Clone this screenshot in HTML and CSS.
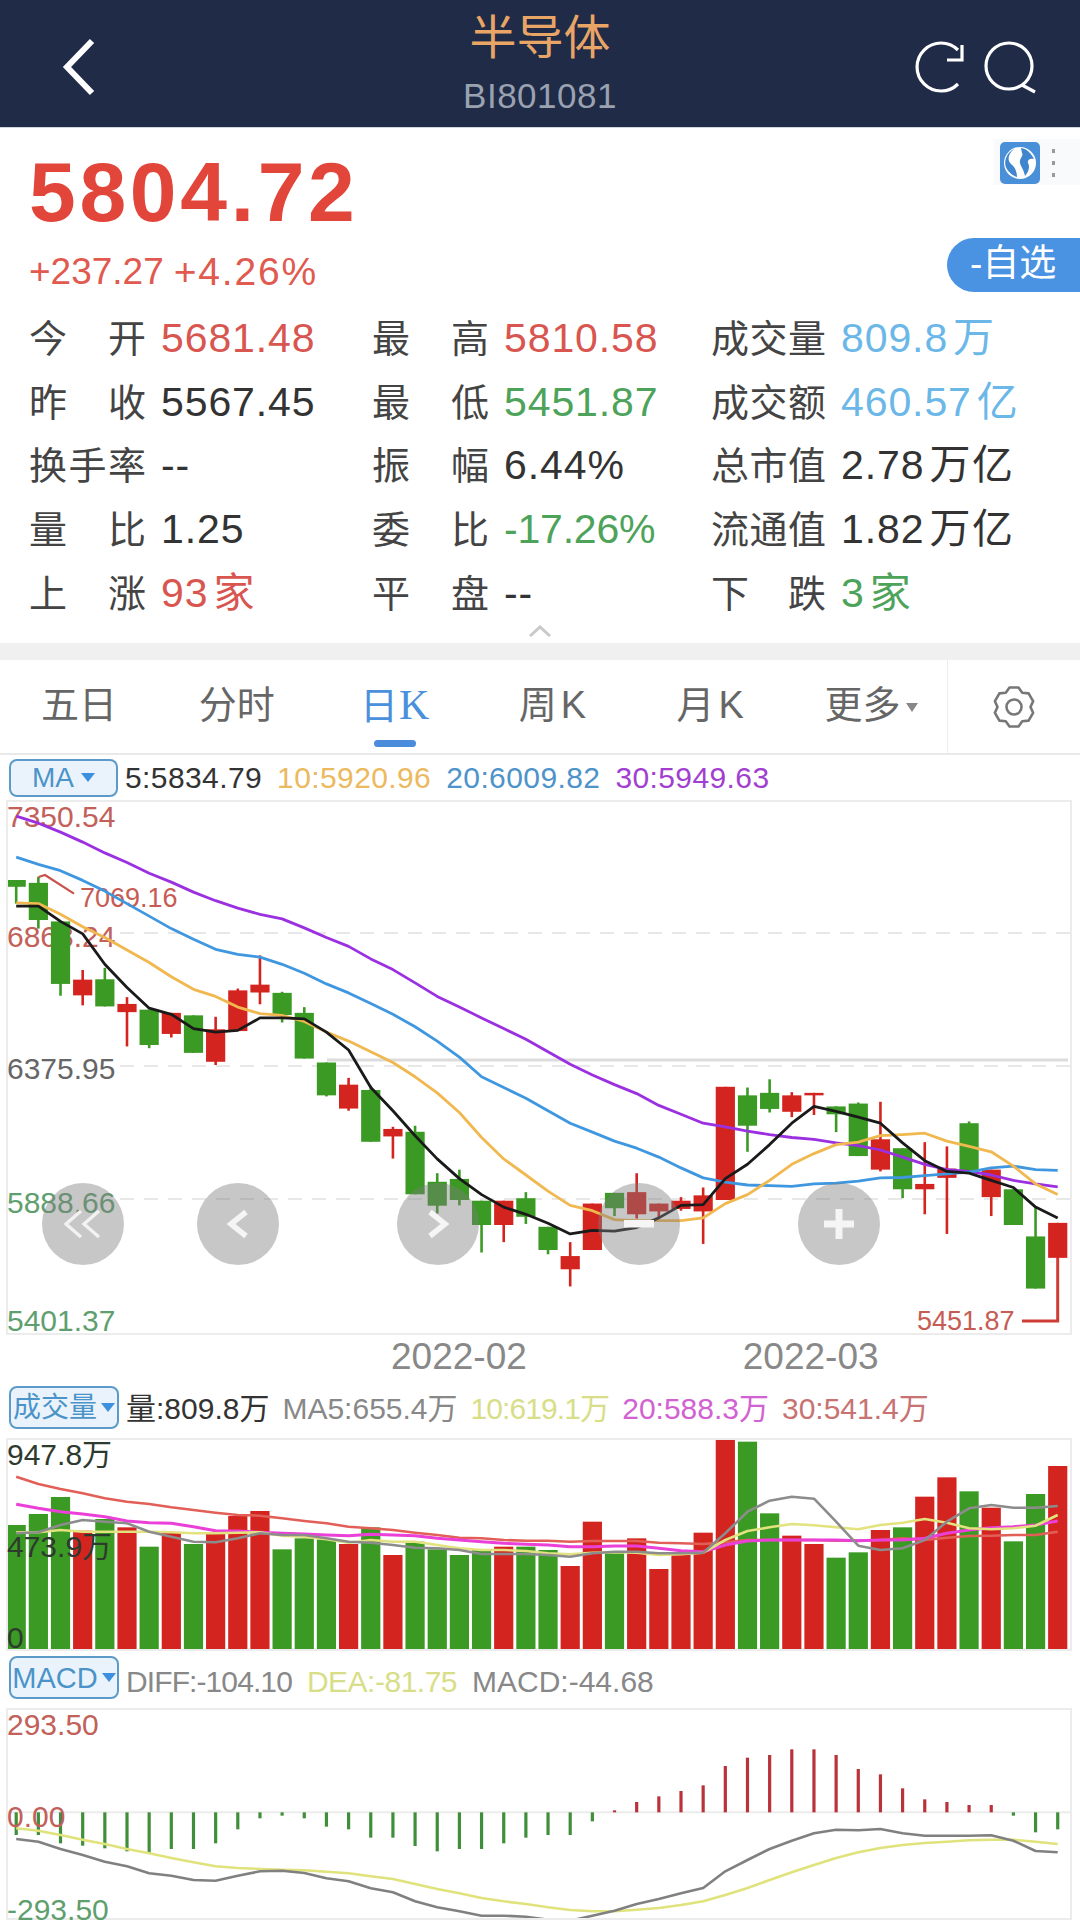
FILE: index.html
```html
<!DOCTYPE html>
<html lang="zh-CN">
<head>
<meta charset="utf-8">
<title>半导体 BI801081</title>
<link rel="stylesheet" href="styles.css">
</head>
<body>
<div class="page">
  <header class="topbar">
    <div class="topbar-left">
      <svg class="back-icon" viewBox="0 0 36 58" width="36" height="58"><path d="M31 3 L6 29 L31 55" fill="none" stroke="#fff" stroke-width="6"/></svg>
    </div>
    <div class="topbar-title">
      <div class="title">半导体</div>
      <div class="code">BI801081</div>
    </div>
    <div class="topbar-right">
      <svg class="tool-icons" viewBox="910 38 130 60" width="130" height="60">
        <path d="M958 84 A24 24 0 1 1 958 50" fill="none" stroke="#fff" stroke-width="3.2"/>
        <path d="M962 45 V60 H947" fill="none" stroke="#fff" stroke-width="3.2"/>
        <circle cx="1009" cy="66" r="23" fill="none" stroke="#fff" stroke-width="3.2"/>
        <path d="M1022 85 L1035 92" fill="none" stroke="#fff" stroke-width="3.2"/>
      </svg>
    </div>
  </header>

  <section class="quote">
    <div class="price">5804.72</div>
    <div class="change"><span>+237.27</span><span class="change-pct">+4.26%</span></div>
    <div class="globe-tab">
      <svg viewBox="0 0 40 42" width="40" height="42">
        <rect width="40" height="42" rx="5" fill="#4a90d9"/>
        <circle cx="20" cy="21" r="16" fill="#fff"/>
        <path d="M14 7 C8 12 7 18 11 22 C15 25 17 30 17 35 C13 34 7 29 5.5 24 C4 17 8 10 14 7Z M21 6 C27 7 31 11 34 17 C31 16 27 17 28 21 C30 24 29 30 25 34 C24 28 21 25 20 21 C19 16 24 14 22 11 Z" fill="#3f86cf"/>
      </svg>
      <div class="dots"><i></i><i></i><i></i></div>
    </div>
    <div class="watch-pill">-自选</div>
    <div class="stats">
      <div class="stat"><span class="stat-label"><b>今</b><b>开</b></span><span class="up">5681.48</span></div>
      <div class="stat"><span class="stat-label"><b>最</b><b>高</b></span><span class="up">5810.58</span></div>
      <div class="stat"><span class="stat-label"><b>成</b><b>交</b><b>量</b></span><span class="info">809.8<i class="unit">万</i></span></div>
      <div class="stat"><span class="stat-label"><b>昨</b><b>收</b></span><span>5567.45</span></div>
      <div class="stat"><span class="stat-label"><b>最</b><b>低</b></span><span class="down">5451.87</span></div>
      <div class="stat"><span class="stat-label"><b>成</b><b>交</b><b>额</b></span><span class="info">460.57<i class="unit">亿</i></span></div>
      <div class="stat"><span class="stat-label"><b>换</b><b>手</b><b>率</b></span><span>--</span></div>
      <div class="stat"><span class="stat-label"><b>振</b><b>幅</b></span><span>6.44%</span></div>
      <div class="stat"><span class="stat-label"><b>总</b><b>市</b><b>值</b></span><span>2.78<i class="unit">万亿</i></span></div>
      <div class="stat"><span class="stat-label"><b>量</b><b>比</b></span><span>1.25</span></div>
      <div class="stat"><span class="stat-label"><b>委</b><b>比</b></span><span class="down narrow">-17.26%</span></div>
      <div class="stat"><span class="stat-label"><b>流</b><b>通</b><b>值</b></span><span>1.82<i class="unit">万亿</i></span></div>
      <div class="stat"><span class="stat-label"><b>上</b><b>涨</b></span><span class="up">93<i class="unit">家</i></span></div>
      <div class="stat"><span class="stat-label"><b>平</b><b>盘</b></span><span>--</span></div>
      <div class="stat"><span class="stat-label"><b>下</b><b>跌</b></span><span class="down">3<i class="unit">家</i></span></div>
    </div>
    <div class="collapse">
      <svg viewBox="0 0 24 12" width="24" height="12"><path d="M2 11 L12 2 L22 11" fill="none" stroke="#c9c9c9" stroke-width="3"/></svg>
    </div>
  </section>

  <div class="band"></div>

  <nav class="tabs">
    <div class="tab-list">
      <div class="tab">五日</div>
      <div class="tab">分时</div>
      <div class="tab active">日<span class="serif-k">K</span></div>
      <div class="tab">周<span class="tab-k">K</span></div>
      <div class="tab">月<span class="tab-k">K</span></div>
      <div class="tab tab-more">更多<i class="caret caret-grey"></i></div>
    </div>
    <div class="tab-gear">
      <svg viewBox="-24 -24 48 48" width="48" height="48">
        <path d="M-4.5 -19.5 L4.5 -19.5 L8.25 -14.3 L14.6 -13.6 L19.1 -5.8 L16.5 0 L19.1 5.8 L14.6 13.6 L8.25 14.3 L4.5 19.5 L-4.5 19.5 L-8.25 14.3 L-14.6 13.6 L-19.1 5.8 L-16.5 0 L-19.1 -5.8 L-14.6 -13.6 L-8.25 -14.3Z" fill="none" stroke="#777" stroke-width="2.6" stroke-linejoin="round"/>
        <circle r="7.5" fill="none" stroke="#777" stroke-width="2.6"/>
      </svg>
    </div>
  </nav>

  <div class="legend legend-ma">
    <div class="badge">MA<i class="caret"></i></div>
    <span class="c-black">5:5834.79</span>
    <span class="c-orange">10:5920.96</span>
    <span class="c-blue">20:6009.82</span>
    <span class="c-purple">30:5949.63</span>
  </div>

  <div class="panel panel-main">
    <span class="axis axis-1 t-up">7350.54</span>
    <span class="axis axis-2 t-up">6863.24</span>
    <span class="axis axis-3 t-mid">6375.95</span>
    <span class="axis axis-4 t-down">5888.66</span>
    <span class="axis axis-5 t-down">5401.37</span>
    <span class="mark mark-high">7069.16</span>
    <span class="mark mark-low">5451.87</span>
    <svg class="chart" id="chart-main" data-view="8 802 1062 531"></svg>
    <div class="nav-btn nav-first">
      <svg viewBox="0 0 40 30" width="40" height="30"><path d="M18 2 L3 15 L18 28 M36 2 L21 15 L36 28" fill="none" stroke="#f2f2f2" stroke-width="3.4"/></svg>
    </div>
    <div class="nav-btn nav-prev">
      <svg viewBox="0 0 24 30" width="24" height="30"><path d="M20 3 L5 15 L20 27" fill="none" stroke="#f5f5f5" stroke-width="5.5"/></svg>
    </div>
    <div class="nav-btn nav-next">
      <svg viewBox="0 0 24 30" width="24" height="30"><path d="M4 3 L19 15 L4 27" fill="none" stroke="#f5f5f5" stroke-width="5.5"/></svg>
    </div>
    <div class="nav-btn nav-minus">
      <svg viewBox="0 0 30 8" width="30" height="8"><rect width="30" height="7.5" fill="#f5f5f5"/></svg>
    </div>
    <div class="nav-btn nav-plus">
      <svg viewBox="0 0 30 30" width="30" height="30"><path d="M0 11.5 H11.5 V0 H18.5 V11.5 H30 V18.5 H18.5 V30 H11.5 V18.5 H0Z" fill="#f5f5f5"/></svg>
    </div>
  </div>

  <div class="dates">
    <span>2022-02</span>
    <span>2022-03</span>
  </div>

  <div class="legend legend-vol">
    <div class="badge badge-wide">成交量<i class="caret"></i></div>
    <span class="c-black">量:809.8万</span>
    <span class="c-grey">MA5:655.4万</span>
    <span class="c-lime tight">10:619.1万</span>
    <span class="c-pink">20:588.3万</span>
    <span class="c-salmon">30:541.4万</span>
  </div>

  <div class="panel panel-vol">
    <svg class="chart" id="chart-vol" data-view="8 1440 1062 209"></svg>
    <span class="axis vol-1 t-dark">947.8万</span>
    <span class="axis vol-2 t-dark">473.9万</span>
    <span class="axis vol-3 t-dark">0</span>
  </div>

  <div class="legend legend-macd">
    <div class="badge badge-wide badge-macd">MACD<i class="caret"></i></div>
    <span class="c-grey tight">DIFF:-104.10</span>
    <span class="c-lime tight-sm">DEA:-81.75</span>
    <span class="c-grey">MACD:-44.68</span>
  </div>

  <div class="panel panel-macd">
    <svg class="chart" id="chart-macd" data-view="8 1711 1062 208"></svg>
    <span class="axis macd-1 t-up">293.50</span>
    <span class="axis macd-2 t-up">0.00</span>
    <span class="axis macd-3 t-down">-293.50</span>
  </div>
</div>
<script src="script.js"></script>
</body>
</html>
```

FILE: styles.css
```css
* { box-sizing: border-box; }
html, body { margin: 0; padding: 0; background: #fff; }
body { font-family: "Liberation Sans", "Noto Sans CJK SC", sans-serif; color: #333; }
.page { width: 1080px; height: 1926px; overflow: hidden; position: relative; }

/* top bar */
.topbar { height: 128px; background: #1f2b47; display: grid; grid-template-columns: 1fr auto 1fr; border-bottom: 1px solid #cfd3da; }
.topbar-left { padding: 38px 0 0 61px; }
.topbar-left svg, .topbar-right svg { display: block; }
.topbar-right { display: flex; justify-content: flex-end; padding: 38px 40px 0 0; }
.topbar-title { text-align: center; padding-top: 12px; display: flex; flex-direction: column; align-items: center; gap: 12px; }
.title { font-size: 47px; line-height: 52px; color: #e9a565; }
.code { font-size: 35px; line-height: 40px; color: #9aa2b0; letter-spacing: .5px; }

/* quote */
.quote { position: relative; height: 515px; padding-top: 20px; }
.price { font-size: 84px; line-height: 88px; font-weight: 700; letter-spacing: 3.7px; color: #e2453a; padding-left: 29px; }
.change { font-size: 37px; line-height: 44px; color: #e05a50; padding-left: 29px; margin-top: 14px; display: flex; gap: 10px; }
.change-pct { font-size: 39px; letter-spacing: 1.8px; }
.globe-tab { position: absolute; right: 0; top: 11px; width: 86px; height: 46px; padding: 1px 0 0 6px; display: flex; align-items: center; gap: 12px; background: #f9fafb; }
.globe-tab svg { display: block; }
.dots { display: flex; flex-direction: column; gap: 8px; }
.dots i { display: block; width: 3px; height: 4px; background: #999; }
.watch-pill { position: absolute; right: 0; top: 110px; width: 133px; height: 54px; border-radius: 27px 0 0 27px; background: #4a93e3; color: #fff; font-size: 37px; line-height: 52px; padding-left: 23px; white-space: nowrap; }

.stats { display: grid; grid-template-columns: 343px 339px 1fr; grid-auto-rows: 63.7px; padding: 13px 0 0 29px; }
.stat { display: flex; align-items: baseline; gap: 15px; font-size: 41px; line-height: 63.7px; color: #333; white-space: nowrap; letter-spacing: .9px; }
.stat-label { width: 117px; display: flex; justify-content: space-between; font-size: 38px; line-height: 60px; color: #444; flex: none; letter-spacing: 0; }
.stat:nth-child(3n) .stat-label { width: 115px; }
.stat-label b { font-weight: 400; }
.unit { font-style: normal; margin-left: 5px; letter-spacing: 1.5px; }
.narrow { letter-spacing: -.2px; }
.up { color: #d8564f; }
.down { color: #4da35a; }
.info { color: #6bb8e8; }
.collapse { display: flex; justify-content: center; height: 17px; }
.collapse svg { display: block; }

.band { height: 17px; background: #f0f0f0; }

/* tabs */
.tabs { height: 95px; display: flex; border-bottom: 2px solid #e9e9e9; }
.tab-list { width: 948px; display: grid; grid-template-columns: repeat(6, 1fr); border-right: 1px solid #ededed; }
.tab { min-width: 0; text-align: center; white-space: nowrap; font-size: 38px; line-height: 91px; color: #666; }
.tab.active { color: #4a90dc; position: relative; }
.tab.active::after { content: ""; position: absolute; left: 58px; bottom: 6px; width: 42px; height: 7px; border-radius: 4px; background: #4a8bdc; }
.serif-k { font-family: "Liberation Serif", serif; font-size: 42px; margin-left: 1px; }
.tab-k { margin-left: 4px; }
.tab-more { padding-left: 6px; }
.tab-gear { flex: 1; display: flex; align-items: center; justify-content: center; }

.caret { display: inline-block; width: 0; height: 0; border-left: 7px solid transparent; border-right: 7px solid transparent; border-top: 9px solid #3d8fe0; margin-left: 7px; }
.caret-grey { border-left-width: 6px; border-right-width: 6px; border-top-color: #888; margin-left: 5px; vertical-align: middle; }

/* legends */
.legend { display: flex; align-items: center; font-size: 30px; white-space: nowrap; padding-left: 9px; height: 45px; }
.legend span { margin-left: 13px; }
.legend .badge + span { margin-left: 7px; }
.legend-ma span { letter-spacing: .4px; margin-left: 15px; }
.legend-vol { height: 52px; align-items: flex-start; }
.legend-macd { height: 52px; margin-top: 5px; align-items: flex-start; }
.legend-macd span { margin-left: 15px; }
.legend-vol span { line-height: 46px; }
.legend-macd span { line-height: 51px; }
.tight { letter-spacing: -.9px; }
.tight-sm { letter-spacing: -.5px; }
.badge { width: 109px; height: 38px; border: 2px solid #5c9bc9; border-radius: 8px; background: #eaf3fb; color: #4b93c8; font-size: 28px; line-height: 34px; display: flex; align-items: center; justify-content: center; flex: none; }
.badge-wide { width: 110px; height: 43px; font-size: 28px; }
.badge-wide .caret { margin-left: 4px; }
.badge-macd { font-size: 29px; }
.c-black { color: #333; }
.c-orange { color: #ebb95e; }
.c-blue { color: #4e93c9; }
.c-purple { color: #a23fd0; }
.c-grey { color: #888; }
.c-lime { color: #d8de88; }
.c-pink { color: #d262d2; }
.c-salmon { color: #c87272; }

/* chart panels */
.panel { position: relative; margin-left: 6px; width: 1066px; border: 2px solid #ececec; }
.panel-main { height: 535px; }
.panel-vol { height: 213px; }
.panel-macd { height: 212px; }
.chart { display: block; width: 100%; height: 100%; position: relative; }
.panel-main .chart { z-index: 1; }
.axis { position: absolute; left: -1px; font-size: 30px; line-height: 30px; white-space: nowrap; }
.t-up { color: #c2605a; }
.t-mid { color: #666; }
.t-down { color: #5f9f6f; }
.t-dark { color: #2f3a2f; z-index: 2; }
.axis-1 { top: 0; }
.axis-2 { top: 120px; }
.axis-3 { top: 252px; }
.axis-4 { top: 386px; }
.axis-5 { top: 504px; }
.mark { position: absolute; font-size: 27px; line-height: 30px; color: #c65c54; white-space: nowrap; }
.mark-high { left: 72px; top: 81px; }
.mark-low { left: 909px; top: 504px; }
.vol-1 { top: 0; }
.vol-2 { top: 92px; }
.vol-3 { top: 183px; }
.macd-1 { top: 0; }
.macd-2 { top: 92px; }
.macd-3 { top: 185px; }

.nav-btn { position: absolute; top: 381px; width: 82px; height: 82px; border-radius: 50%; background: rgba(125,125,125,.43); display: flex; align-items: center; justify-content: center; z-index: 3; }
.nav-btn svg { display: block; }
.nav-first { left: 34px; }
.nav-prev { left: 189px; }
.nav-next { left: 389px; }
.nav-minus { left: 590px; }
.nav-plus { left: 790px; }

/* dates */
.dates { height: 51px; display: flex; font-size: 37px; color: #888; padding-left: 391px; gap: 216px; align-items: flex-start; line-height: 43px; }
```

FILE: script.js
```javascript
var NS = "http://www.w3.org/2000/svg";
var GREEN = "#3a9a24", RED = "#d4241f";

function X(i) { return 16.2 + 22.16 * i; }
function mainY(z) { return 800 + z / 2.8; }
function subY(z, base) { return base + z / 3; }

function add(svg, tag, attrs) {
  var el = document.createElementNS(NS, tag);
  for (var k in attrs) el.setAttribute(k, attrs[k]);
  svg.appendChild(el);
  return el;
}
function line(svg, vals, toY, color, width) {
  var pts = vals.map(function (v, i) { return X(i).toFixed(1) + "," + toY(v).toFixed(1); }).join(" ");
  add(svg, "polyline", { points: pts, fill: "none", stroke: color, "stroke-width": width, "stroke-linejoin": "round" });
}
function setup(id) {
  var svg = document.getElementById(id);
  svg.setAttribute("viewBox", svg.getAttribute("data-view"));
  return svg;
}

/* candles: colour, wick top, body top, body bottom, wick bottom */
var candles = [
  "G224,224,243,290","G215,232,336,360","G340,340,515,548","R476,503,547,575","G470,502,578,578","R552,571,594,690",
  "G587,587,686,695","R596,596,655,665","G603,603,708,708","R607,642,733,742","R528,533,647,647","R435,517,539,572",
  "G537,540,602,623","G580,596,724,724","G735,735,827,830","R778,797,864,870","G800,812,957,957","R915,921,942,1004",
  "G912,929,1104,1104","G1045,1069,1136,1158","G1035,1061,1120,1135","G1122,1122,1190,1267","R1122,1122,1190,1238","G1098,1115,1167,1187",
  "G1195,1195,1260,1272","R1238,1277,1314,1362","R1130,1130,1260,1260","G1100,1100,1143,1165","R1045,1098,1160,1172","R1130,1130,1152,1172",
  "R1112,1122,1145,1150","R1085,1107,1152,1243","R803,803,1120,1120","G805,827,912,985","G782,820,865,875","R818,827,873,888",
  "R820,820,827,882","G858,858,880,930","G847,850,997,997","R845,950,1035,1040","G975,975,1090,1115","R958,1075,1090,1160",
  "R970,1032,1058,1215","G900,905,1040,1040","R1035,1035,1112,1165","G1090,1090,1190,1190","G1140,1222,1368,1368","R1184,1184,1282,1282"
];

var ma5 = [297,297,340,375,460,525,583,600,640,650,645,610,610,613,650,700,805,870,940,1005,1060,1105,1140,1160,1185,1215,1205,1207,1197,1170,1135,1133,1060,1020,965,905,858,872,888,905,960,1010,1040,1045,1065,1085,1140,1170];
var ma10 = [288,290,320,355,385,420,455,495,530,550,580,598,603,620,650,675,705,735,775,820,875,945,1005,1050,1095,1135,1150,1175,1178,1178,1178,1170,1130,1105,1065,1020,990,965,958,940,937,933,955,970,985,1025,1075,1105];
var ma20 = [160,180,198,225,255,290,325,360,390,418,432,440,460,485,515,540,570,600,635,675,720,775,805,835,870,905,930,955,975,1000,1030,1058,1070,1078,1080,1082,1075,1073,1067,1058,1057,1052,1047,1042,1030,1025,1035,1037];
var ma30 = [45,65,90,118,148,175,205,230,258,282,303,320,333,358,385,410,445,475,512,550,580,610,640,670,705,740,770,797,822,855,880,905,915,927,937,945,950,960,968,980,1000,1020,1035,1040,1050,1065,1075,1083];

(function drawMain() {
  var svg = setup("chart-main");
  [933, 1066, 1199].forEach(function (y) {
    add(svg, "line", { x1: 120, x2: 1070, y1: y, y2: y, stroke: "#e8e8e8", "stroke-width": 2, "stroke-dasharray": "14 10" });
  });
  add(svg, "line", { x1: 327, x2: 1068, y1: 1060, y2: 1060, stroke: "#dcdcdc", "stroke-width": 3 });

  candles.forEach(function (c, i) {
    var color = c[0] === "G" ? GREEN : RED;
    var v = c.slice(1).split(",").map(Number);
    var x = X(i);
    add(svg, "line", { x1: x, x2: x, y1: mainY(v[0]), y2: mainY(v[3]), stroke: color, "stroke-width": 2.6 });
    add(svg, "rect", { x: x - 9.6, y: mainY(v[1]), width: 19.2, height: Math.max(mainY(v[2]) - mainY(v[1]), 2), fill: color });
  });

  /* high and low markers */
  add(svg, "polyline", { points: "38.6,877 45,875 74,893.6", fill: "none", stroke: "#c9524a", "stroke-width": 2.2 });
  add(svg, "polyline", { points: "1022,1321 1057.7,1321 1057.7,1258", fill: "none", stroke: "#cf3c35", "stroke-width": 3 });

  line(svg, ma30, mainY, "#9b30e0", 2.8);
  line(svg, ma20, mainY, "#3f97e0", 2.8);
  line(svg, ma10, mainY, "#f0b84f", 2.8);
  line(svg, ma5, mainY, "#1a1a1a", 2.8);
})();

var volTops = [465,432,381,482,447,472,530,488,522,488,438,423,538,505,508,522,472,555,515,538,555,540,530,530,540,588,455,545,505,597,555,488,197,215,430,497,522,563,547,480,472,380,322,364,413,514,372,288];
var volSide = ["G","G","G","R","G","R","G","R","G","R","R","R","G","G","G","R","G","R","G","G","G","G","R","G","G","R","R","G","R","R","R","R","R","G","G","R","R","G","G","R","G","R","R","G","R","G","G","R"];
var volLine5 = [490,487,465,450,455,460,485,500,515,517,505,490,495,495,505,515,518,525,533,535,540,552,552,552,555,560,550,545,545,550,550,548,490,425,392,380,386,455,527,540,535,510,455,415,405,413,413,408];
var volLine10 = [487,487,480,485,485,485,485,487,490,490,488,487,497,500,508,518,510,515,515,525,535,540,540,543,550,553,548,547,548,555,553,548,510,483,472,462,466,472,478,465,458,447,458,475,478,475,467,435];
var volLine20 = [403,415,425,432,440,453,458,460,470,482,483,487,490,492,495,497,493,495,497,505,510,515,520,523,525,530,530,528,528,535,542,545,525,513,510,510,510,510,512,510,510,505,490,480,473,470,465,453];
var volLine30 = [320,342,357,370,385,395,402,412,420,428,435,437,445,453,460,470,475,480,488,495,503,505,510,512,512,515,513,513,513,518,520,522,517,510,510,510,510,512,512,510,505,510,503,498,497,495,495,485];

(function drawVol() {
  var svg = setup("chart-vol");
  var y = function (z) { return subY(z, 1370); };
  var base = y(842);
  volTops.forEach(function (t, i) {
    add(svg, "rect", { x: X(i) - 9.6, y: y(t), width: 19.2, height: base - y(t), fill: volSide[i] === "G" ? GREEN : RED });
  });
  line(svg, volLine30, y, "#e25f58", 2.6);
  line(svg, volLine20, y, "#ea40d8", 3);
  line(svg, volLine10, y, "#e2e27e", 2.6);
  line(svg, volLine5, y, "#8c8c8c", 2.6);
})();

var histEnd = [558,558,583,590,598,607,615,600,600,583,541,508,500,508,533,541,566,566,591,607,600,600,583,566,558,558,517,484,459,442,426,409,351,326,318,301,301,318,360,376,418,451,459,468,468,500,550,541];
var diff = [570,578,600,618,638,652,673,680,693,695,680,667,665,672,688,697,718,730,757,775,787,800,800,803,812,815,800,785,765,750,733,717,667,633,600,575,553,542,544,540,553,560,560,560,559,575,606,610];
var dea = [538,545,558,572,585,600,613,627,640,652,657,660,662,664,668,673,682,690,705,720,733,747,757,765,775,783,787,787,782,777,768,757,738,717,693,670,648,627,610,597,588,582,578,574,572,572,578,585];

(function drawMacd() {
  var svg = setup("chart-macd");
  var y = function (z) { return subY(z, 1650); };
  add(svg, "line", { x1: 8, x2: 1070, y1: y(490), y2: y(490), stroke: "#ececec", "stroke-width": 2 });
  histEnd.forEach(function (e, i) {
    add(svg, "line", { x1: X(i), x2: X(i), y1: y(490), y2: y(e), stroke: e > 490 ? "#3f8f3a" : "#b8333a", "stroke-width": 3.2 });
  });
  line(svg, dea, y, "#e0e27c", 2.6);
  line(svg, diff, y, "#808080", 2.6);
})();
```
